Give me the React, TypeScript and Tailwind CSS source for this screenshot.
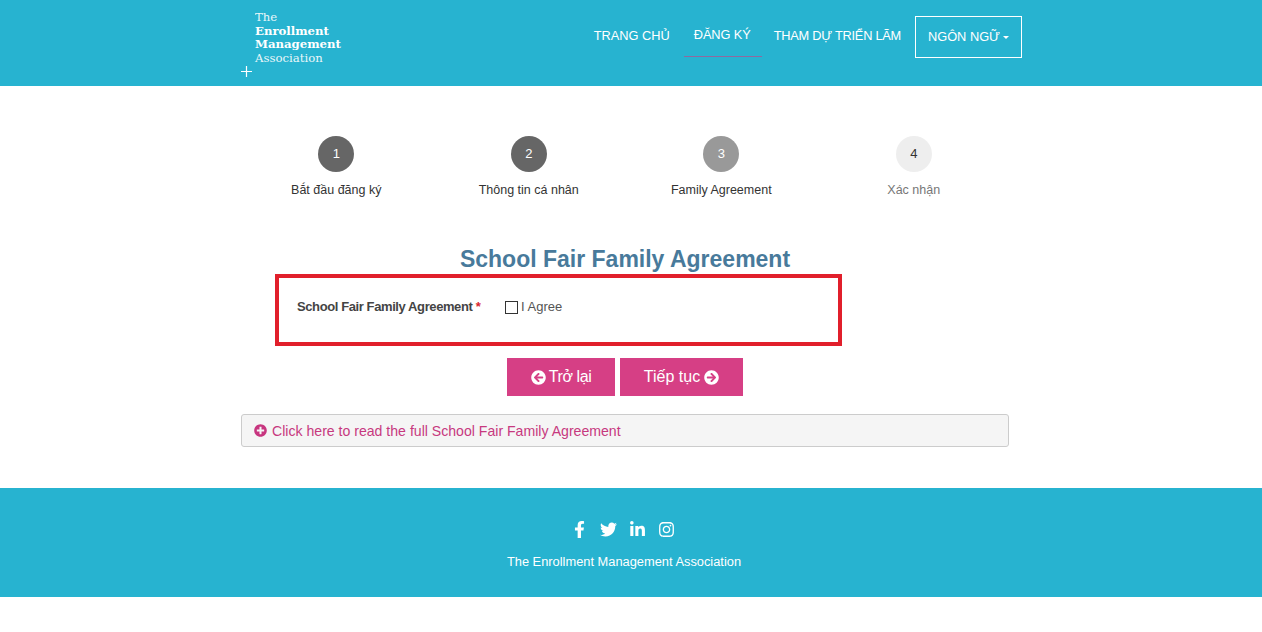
import React from "react";
import { FaFacebookF, FaTwitter, FaLinkedinIn, FaInstagram, FaArrowCircleLeft, FaArrowCircleRight, FaPlusCircle } from "react-icons/fa";

const steps = [
  { n: "1", label: "Bắt đầu đăng ký", circle: "bg-[#666666] text-white", text: "text-[#333333]" },
  { n: "2", label: "Thông tin cá nhân", circle: "bg-[#666666] text-white", text: "text-[#333333]" },
  { n: "3", label: "Family Agreement", circle: "bg-[#999999] text-white", text: "text-[#333333]" },
  { n: "4", label: "Xác nhận", circle: "bg-[#eeeeee] text-[#333333]", text: "text-[#777777]" },
];

export default function App() {
  return (
    <div className="min-h-[632px] bg-white font-['Liberation_Sans',Arial,sans-serif] text-[#333333]">
      <header className="h-[86px] bg-[#27b3d0]">
        <div className="mx-auto flex h-full w-[782px] justify-between">
          <div className="ml-[1px] flex flex-col pt-[11px]">
            <div className="pl-[14px] font-['DejaVu_Serif',serif] text-[11.7px] leading-[13.5px] text-white">
              <div className="font-light opacity-90">The</div>
              <div className="font-bold">Enrollment</div>
              <div className="font-bold">Management</div>
              <div className="font-light opacity-90">Association</div>
            </div>
            <svg width="11" height="11" viewBox="0 0 11 11" className="mt-[1px]" stroke="#fff" strokeWidth="1.2">
              <path d="M0 5.5h11M5.5 0v11" />
            </svg>
          </div>
          <nav className="flex items-start gap-[2px] pt-[16px] text-[12.8px] text-white">
            <a className="flex h-[41px] items-center pb-[2px] pl-[11px] pr-[12px]">TRANG CHỦ</a>
            <a className="flex h-[41px] items-center border-b border-[#8f6a9f] pb-[2px] pl-[10px] pr-[11px] tracking-[-0.1px]">ĐĂNG KÝ</a>
            <a className="flex h-[41px] items-center pb-[2px] pl-[10px] pr-[12px] tracking-[-0.25px]">THAM DỰ TRIỂN LÃM</a>
            <button className="flex h-[42px] w-[107px] items-center justify-center gap-[3px] border border-white">
              NGÔN NGỮ
              <span className="mt-[1px] h-0 w-0 border-x-[3px] border-t-[3px] border-x-transparent border-t-white" />
            </button>
          </nav>
        </div>
      </header>

      <main className="mx-auto w-[782px]">
        <div className="grid w-[770px] grid-cols-4 pt-[50px]">
          {steps.map((s) => (
            <div key={s.n} className="flex flex-col items-center">
              <div className={`flex h-9 w-9 items-center justify-center rounded-full text-[13px] ${s.circle}`}>{s.n}</div>
              <div className={`mt-[9px] text-[12.5px] leading-[18px] ${s.text}`}>{s.label}</div>
            </div>
          ))}
        </div>

        <div className="ml-[1px] w-[768px]">
          <h1 className="mt-[46px] text-center text-[23px] font-bold leading-[28px] text-[#487a9b]">School Fair Family Agreement</h1>
          <div className="ml-[34px] mt-[1px] flex h-[72px] w-[567px] items-start border-4 border-[#e11f2b] pl-[18px] pt-[20px] text-[13px] leading-[18px]">
            <span className="w-[208px] font-bold tracking-[-0.4px] text-[#444444]">
              School Fair Family Agreement <span className="text-[#d9262e]">*</span>
            </span>
            <span className="flex items-center text-[#555555]">
              <span className="mr-[3px] h-[13px] w-[13px] border border-[#333333] bg-white" />I Agree
            </span>
          </div>

          <div className="mt-[12px] flex justify-center gap-[5px] text-[16px] text-white">
            <button className="flex h-[38px] w-[108px] items-center justify-center gap-[3px] bg-[#d63f85] tracking-[-0.4px]">
              <FaArrowCircleLeft className="text-[15px]" /> Trở lại
            </button>
            <button className="flex h-[38px] w-[123px] items-center justify-center gap-[4px] bg-[#d63f85]">
              Tiếp tục <FaArrowCircleRight className="text-[15px]" />
            </button>
          </div>

          <div className="mt-[18px] flex h-[33px] items-center gap-[5px] rounded-[3px] border border-[#cccccc] bg-[#f5f5f5] pl-[12px] pt-[2px] text-[14.1px] text-[#c7397f]">
            <FaPlusCircle className="mt-[-2px] text-[13px] text-[#c7357f]" />
            Click here to read the full School Fair Family Agreement
          </div>
        </div>
      </main>

      <footer className="mt-[41px] flex h-[109px] flex-col items-center bg-[#27b3d0] pr-[15px] text-white">
        <div className="mt-[33px] flex items-center gap-[12px] pr-[2px] text-[17px]">
          <FaFacebookF />
          <FaTwitter />
          <FaLinkedinIn />
          <FaInstagram />
        </div>
        <div className="mt-[15px] pl-[1px] text-[12.85px] leading-[18px]">The Enrollment Management Association</div>
      </footer>
    </div>
  );
}
